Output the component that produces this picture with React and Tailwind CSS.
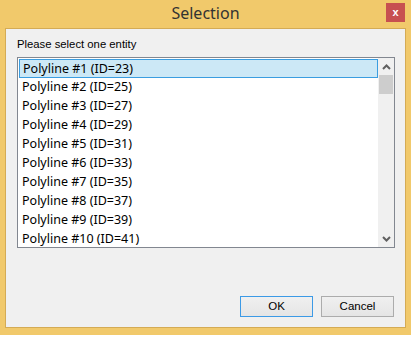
const items = [
  { n: 1, id: 23 },
  { n: 2, id: 25 },
  { n: 3, id: 27 },
  { n: 4, id: 29 },
  { n: 5, id: 31 },
  { n: 6, id: 33 },
  { n: 7, id: 35 },
  { n: 8, id: 37 },
  { n: 9, id: 39 },
  { n: 10, id: 41 },
]

const Chevron = ({ up }) => (
  <svg width="9" height="6" viewBox="0 0 9 6" className="block">
    {up ? (
      <path d="M1 5 L4.5 1.5 L8 5" fill="none" stroke="#606060" strokeWidth="2" />
    ) : (
      <path d="M1 1 L4.5 4.5 L8 1" fill="none" stroke="#606060" strokeWidth="2" />
    )}
  </svg>
)

function App() {
  return (
    <div className="w-[413px] h-[338px] bg-white" style={{ fontFamily: '"Liberation Sans", Arial, sans-serif' }}>
      {/* window frame */}
      <div className="flex w-[411px] h-[335px] flex-col bg-[#f1c96b]">
        {/* title bar */}
        <div className="grid h-[28px] grid-cols-[1fr_auto_1fr] items-start">
          <div />
          <span
            className="pt-[1px] text-[16px] leading-[24px] text-[#323232]"
            style={{ fontFamily: '"Noto Sans", "Open Sans", sans-serif' }}
          >
            Selection
          </span>
          <div className="flex justify-end pr-[6px] pt-[3px]">
            <div className="flex h-[19px] w-[19px] items-center justify-center bg-[#c75050]">
              <span className="text-[11px] font-bold leading-none text-white">x</span>
            </div>
          </div>
        </div>

        {/* client area */}
        <div className="mx-[5px] flex h-[300px] flex-col border border-[#d4ab55] bg-[#f0f0f0] pl-[11px] pr-[11px] pt-[9px] pb-[10px]">
          <div className="h-[13px] text-[11.3px] leading-[13px] text-black">Please select one entity</div>

          {/* list box */}
          <div className="mt-[6px] flex h-[191px] w-[378px] border border-[#828790] bg-white">
            <div className="flex-1 overflow-hidden pl-[1px] pt-[1px]">
              {items.map((it, i) => (
                <div
                  key={it.n}
                  className={
                    'h-[19px] pl-[3px] text-[12.5px] leading-[18px] text-black ' +
                    (i === 0 ? 'border border-[#3a9de0] bg-[#cce8f6] pl-[2px] leading-[17px]' : '')
                  }
                  style={{ fontFamily: '"Noto Sans", "Open Sans", sans-serif' }}
                >
                  Polyline #{it.n} (ID={it.id})
                </div>
              ))}
            </div>
            {/* scrollbar */}
            <div className="flex w-[16px] flex-col bg-[#f0f0f0]">
              <div className="flex h-[17px] items-center justify-center">
                <Chevron up />
              </div>
              <div className="mx-[1px] h-[19px] bg-[#cdcdcd]" />
              <div className="flex-1" />
              <div className="flex h-[17px] items-center justify-center">
                <Chevron />
              </div>
            </div>
          </div>

          <div className="flex-1" />

          {/* buttons */}
          <div className="flex justify-end gap-[8px]">
            <button className="h-[21px] w-[73px] border border-[#3c9ae6] bg-gradient-to-b from-[#f0f0f0] to-[#e5e5e5] text-[11.5px] leading-none text-black">
              OK
            </button>
            <button className="h-[21px] w-[73px] border border-[#acacac] bg-gradient-to-b from-[#f0f0f0] to-[#e5e5e5] text-[11.5px] leading-none text-black">
              Cancel
            </button>
          </div>
        </div>
      </div>
    </div>
  )
}

export default App
